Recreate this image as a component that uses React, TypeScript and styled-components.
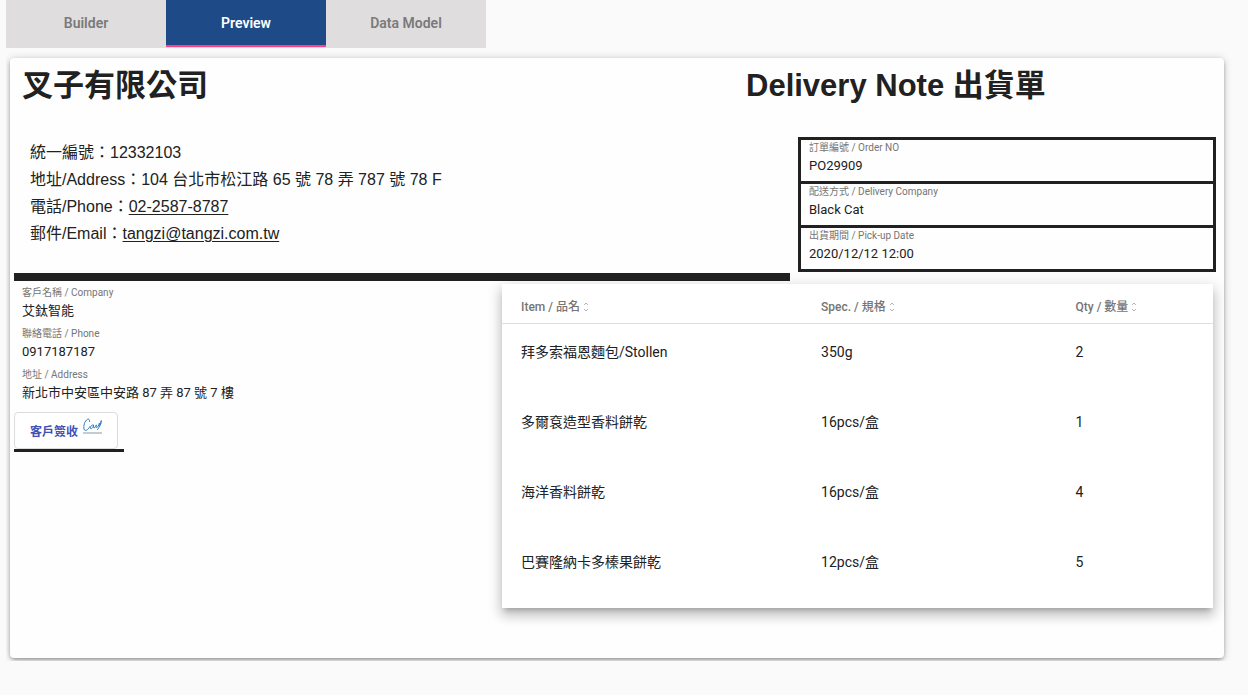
import React from "react";
import styled, { createGlobalStyle } from "styled-components";

const ink = "#212121";
const muted = "#757575";
const roboto = `Roboto, "Noto Sans CJK TC", sans-serif`;
const helvetica = `"Liberation Sans", "Noto Sans CJK TC", sans-serif`;

const GlobalStyle = createGlobalStyle`
  * { box-sizing: border-box; }
  body {
    margin: 0;
    background: #fafafa;
    color: ${ink};
    font-family: ${roboto};
    font-size: 14px;
  }
  h1, p, dl, dd { margin: 0; }
`;

const Page = styled.div`
  padding: 0 16px 0 6px;
`;

const Tabs = styled.nav`
  display: flex;
  width: fit-content;
  height: 48px;
  background: #dfdddd;
`;

const Tab = styled.button<{ $active?: boolean }>`
  width: 160px;
  height: ${(p) => (p.$active ? 47 : 48)}px;
  padding: ${(p) => (p.$active ? "0" : "0 0 2px")};
  border: 0;
  border-bottom: ${(p) => (p.$active ? "2px solid #ff4081" : "0")};
  background: ${(p) => (p.$active ? "#1e4a88" : "transparent")};
  color: ${(p) => (p.$active ? "#ffffff" : "#7a7a7a")};
  font-family: ${roboto};
  font-size: 14px;
  font-weight: 600;
  cursor: pointer;
`;

const Main = styled.main`
  overflow: hidden;
  padding: 10px 8px 3px 4px;
`;

const Card = styled.article`
  min-height: 600px;
  padding: 0 8px 50px 4px;
  border-radius: 4px;
  background: #fefefe;
  box-shadow: 0 2px 4px -1px rgba(0, 0, 0, 0.4), 0 1px 8px rgba(0, 0, 0, 0.2);
`;

const Row = styled.div<{ $columns: string; $gap?: number }>`
  display: grid;
  grid-template-columns: ${(p) => p.$columns};
  column-gap: ${(p) => p.$gap ?? 0}px;
  align-items: start;
`;

const Title = styled.h1`
  padding: 6px 8px 0;
  font-family: ${helvetica};
  font-size: 31px;
  line-height: 44px;
  font-weight: 700;
`;

const CompanyInfo = styled.address`
  padding: 31px 16px 26px;
  border-bottom: 8px solid ${ink};
  font-family: ${helvetica};
  font-size: 16px;
  line-height: 27px;
  font-style: normal;
`;

const InfoLink = styled.a`
  color: inherit;
  text-underline-offset: 2px;
`;

const OrderBox = styled.dl`
  margin-top: 29px;
  border: 3px solid ${ink};
  border-bottom: 0;
`;

const Customer = styled.dl`
  padding-top: 4px;
`;

const Field = styled.div<{ $ruled?: boolean }>`
  padding: 0 8px 4px;
  border-bottom: ${(p) => (p.$ruled ? `3px solid ${ink}` : "0")};
`;

const FieldLabel = styled.dt`
  color: ${muted};
  font-size: 10px;
  line-height: 15px;
`;

const FieldValue = styled.dd`
  font-size: 13px;
  line-height: 22px;
`;

const Signature = styled.div`
  width: 110px;
  margin-top: 4px;
  border-bottom: 3px solid ${ink};
`;

const SignButton = styled.button`
  display: flex;
  align-items: center;
  gap: 5px;
  height: 37px;
  padding: 0 15px;
  border: 1px solid #dcdcdc;
  border-radius: 4px;
  background: #ffffff;
  color: #3f51b5;
  font-family: ${roboto};
  font-size: 12px;
  font-weight: 600;
  white-space: nowrap;
  cursor: pointer;
`;

const Scribble = styled.svg`
  width: 19px;
  height: 17px;
  margin-bottom: 8px;
`;

const TableCard = styled.section`
  margin: 3px 3px 0 0;
  padding-bottom: 4px;
  background: #ffffff;
  box-shadow: 0 5px 5px -3px rgba(0, 0, 0, 0.2), 0 8px 10px 1px rgba(0, 0, 0, 0.14),
    0 3px 14px 2px rgba(0, 0, 0, 0.12);
`;

const Items = styled.table`
  width: 100%;
  border-spacing: 0;
  table-layout: fixed;
`;

const HeadCell = styled.th<{ $width: string }>`
  width: ${(p) => p.$width};
  height: 40px;
  padding: 6px 19px 0;
  border-bottom: 1px solid #dedede;
  text-align: left;
`;

const SortButton = styled.button`
  display: flex;
  align-items: center;
  gap: 3px;
  padding: 0;
  border: 0;
  background: none;
  color: ${muted};
  font-family: ${roboto};
  font-size: 12px;
  font-weight: 500;
  line-height: 20px;
  cursor: pointer;
`;

const Cell = styled.td`
  height: 70px;
  padding: 18px 19px 32px;
  font-size: 14px;
  line-height: 20px;
`;

const orderFields = [
  ["訂單編號 / Order NO", "PO29909"],
  ["配送方式 / Delivery Company", "Black Cat"],
  ["出貨期間 / Pick-up Date", "2020/12/12 12:00"],
];

const customerFields = [
  ["客戶名稱 / Company", "艾鈦智能"],
  ["聯絡電話 / Phone", "0917187187"],
  ["地址 / Address", "新北市中安區中安路 87 弄 87 號 7 樓"],
];

const columns = [
  { label: "Item / 品名", width: "42.2%" },
  { label: "Spec. / 規格", width: "35.8%" },
  { label: "Qty / 數量", width: "22%" },
];

const items = [
  ["拜多索福恩麵包/Stollen", "350g", "2"],
  ["多爾袞造型香料餅乾", "16pcs/盒", "1"],
  ["海洋香料餅乾", "16pcs/盒", "4"],
  ["巴賽隆納卡多榛果餅乾", "12pcs/盒", "5"],
];

function Fields({ fields, ruled }: { fields: string[][]; ruled?: boolean }) {
  return (
    <>
      {fields.map(([label, value]) => (
        <Field key={label} $ruled={ruled}>
          <FieldLabel>{label}</FieldLabel>
          <FieldValue>{value}</FieldValue>
        </Field>
      ))}
    </>
  );
}

function SortIcon() {
  return (
    <svg width="6" height="10" viewBox="0 0 6 10" fill="none" stroke="#b5b5b5" aria-hidden="true">
      <path d="M1 3 3 1l2 2M1 7l2 2 2-2" />
    </svg>
  );
}

export default function App() {
  return (
    <Page>
      <GlobalStyle />
      <Tabs>
        <Tab>Builder</Tab>
        <Tab $active aria-current="page">Preview</Tab>
        <Tab>Data Model</Tab>
      </Tabs>
      <Main>
        <Card>
          <Row $columns="724fr 478fr">
            <Title>叉子有限公司</Title>
            <Title>Delivery Note 出貨單</Title>
          </Row>
          <Row $columns="776fr 418fr" $gap={8}>
            <CompanyInfo>
              <p>統一編號：12332103</p>
              <p>地址/Address：104 台北市松江路 65 號 78 弄 787 號 78 F</p>
              <p>電話/Phone：<InfoLink href="tel:02-2587-8787">02-2587-8787</InfoLink></p>
              <p>郵件/Email：<InfoLink href="mailto:tangzi@tangzi.com.tw">tangzi@tangzi.com.tw</InfoLink></p>
            </CompanyInfo>
            <OrderBox>
              <Fields fields={orderFields} ruled />
            </OrderBox>
          </Row>
          <Row $columns="488fr 714fr">
            <div>
              <Customer>
                <Fields fields={customerFields} />
              </Customer>
              <Signature>
                <SignButton>
                  客戶簽收
                  <Scribble viewBox="0 0 19 17" fill="none" aria-hidden="true">
                    <path
                      d="M6.500 3.500C7 1 5 .5 3.500 2 1 4.500 0 10 1.500 12c1.500 1.500 4-1 5.500-3.500M10.500 7C9 6 7 9 7.500 10.500 8.500 11.500 10.500 9 10.500 7c0 2 0 3 .8 3C12.500 9 12.500 7 13.500 7c0 1-.8 2.500 0 2.500C15 9.500 16 7 16.500 5c-.5 2-.3 3 .3 2.500C17.800 6.500 18 4 18.300 2.500 18 6 16.500 9 14.500 11.500"
                      stroke="#2a7cc7"
                      strokeLinecap="round"
                      strokeLinejoin="round"
                    />
                    <path d="M0 15h19" stroke="#c3ccd2" strokeWidth="2" />
                  </Scribble>
                </SignButton>
              </Signature>
            </div>
            <TableCard>
              <Items>
                <thead>
                  <tr>
                    {columns.map((c) => (
                      <HeadCell key={c.label} $width={c.width} scope="col">
                        <SortButton>
                          {c.label}
                          <SortIcon />
                        </SortButton>
                      </HeadCell>
                    ))}
                  </tr>
                </thead>
                <tbody>
                  {items.map((row) => (
                    <tr key={row[0]}>
                      {row.map((value) => (
                        <Cell key={value}>{value}</Cell>
                      ))}
                    </tr>
                  ))}
                </tbody>
              </Items>
            </TableCard>
          </Row>
        </Card>
      </Main>
    </Page>
  );
}
